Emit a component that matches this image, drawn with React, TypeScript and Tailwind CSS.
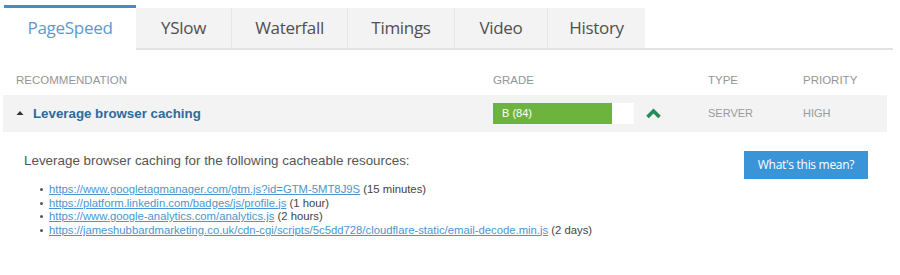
import React from "react";

const tabs = [
  { label: "YSlow", w: "w-[95px]" },
  { label: "Waterfall", w: "w-[116px]" },
  { label: "Timings", w: "w-[107px]" },
  { label: "Video", w: "w-[93px]" },
  { label: "History", w: "w-[98px]" },
];

const links = [
  { url: "https://www.googletagmanager.com/gtm.js?id=GTM-5MT8J9S", note: "(15 minutes)" },
  { url: "https://platform.linkedin.com/badges/js/profile.js", note: "(1 hour)" },
  { url: "https://www.google-analytics.com/analytics.js", note: "(2 hours)" },
  { url: "https://jameshubbardmarketing.co.uk/cdn-cgi/scripts/5c5dd728/cloudflare-static/email-decode.min.js", note: "(2 days)" },
];

export default function App() {
  return (
    <div className="w-[900px] h-[275px] bg-white pt-[5px] font-['Liberation_Sans',Arial,sans-serif] overflow-hidden">
      {/* Tabs */}
      <div className="flex ml-[4px] mr-[7px] h-[45px] font-['Open_Sans',sans-serif] text-[17px] tracking-[-0.3px]">
        <div className="w-[132px] h-[45px] border-t-[3px] border-[#3d8fd1] bg-white text-[#5a9ad0] flex items-center justify-center pb-[2px]">
          PageSpeed
        </div>
        {tabs.map((t, i) => (
          <div
            key={t.label}
            className={`${t.w} mt-[3px] h-[42px] bg-[#f3f3f3] border-b-2 border-b-[#e2e2e2] ${i > 0 ? "border-l border-l-[#e6e6e6]" : ""} text-[#4f4f4f] flex items-center justify-center pb-[1px]`}
          >
            {t.label}
          </div>
        ))}
        <div className="flex-1 self-end border-b-2 border-[#e2e2e2]" />
      </div>

      {/* Table */}
      <div className="ml-[3px] w-[884px] mt-[21px]">
        <div className="grid grid-cols-[490px_215px_95px_1fr] text-[11.5px] text-[#959595] uppercase h-[20px] items-center">
          <div className="pl-[13px]">Recommendation</div>
          <div>Grade</div>
          <div>Type</div>
          <div>Priority</div>
        </div>
        <div className="grid grid-cols-[490px_215px_95px_1fr] bg-[#f3f3f3] h-[37px] mt-[4px] items-center">
          <div className="flex items-center pl-[13px]">
            <svg width="8" height="6" viewBox="0 0 8 6" className="mr-[9px] mt-[-1px]">
              <polygon points="4,1 7.5,5 0.5,5" fill="#333" />
            </svg>
            <span className="text-[13.3px] font-bold text-[#2c6a9e]">Leverage browser caching</span>
          </div>
          <div className="flex items-center">
            <div className="w-[141px] h-[21px] bg-white flex">
              <div className="w-[119px] h-full bg-[#6db43e] text-white text-[11px] flex items-center pl-[9px]">
                B (84)
              </div>
            </div>
            <svg width="17" height="11" viewBox="0 0 17 11" className="ml-[11px]">
              <polyline points="2.5,9 8.5,3 14.5,9" fill="none" stroke="#268a5a" strokeWidth="3.6" />
            </svg>
          </div>
          <div className="text-[11px] text-[#9a9a9a]">SERVER</div>
          <div className="text-[11px] text-[#9a9a9a]">HIGH</div>
        </div>
      </div>

      {/* Details */}
      <div className="flex ml-[24px] mt-[20px] w-[844px] justify-between">
        <div>
          <p className="text-[13.4px] text-[#555] leading-[16px] mt-[1px]">
            Leverage browser caching for the following cacheable resources:
          </p>
          <ul className="mt-[14px] ml-[16px] text-[11.3px] leading-[13.5px] text-[#444]">
            {links.map((l) => (
              <li key={l.url} className="flex items-center">
                <span className="w-[3px] h-[3px] rounded-full bg-[#555] mr-[6px] shrink-0" />
                <span>
                  <a className="text-[#4a95d2] underline decoration-[#4a95d2]">{l.url}</a> {l.note}
                </span>
              </li>
            ))}
          </ul>
        </div>
        <button className="w-[124px] h-[28px] mt-[-1px] bg-[#3a94d8] text-white text-[12px] font-['Open_Sans',sans-serif] tracking-[-0.3px]">
          What&apos;s this mean?
        </button>
      </div>
    </div>
  );
}
